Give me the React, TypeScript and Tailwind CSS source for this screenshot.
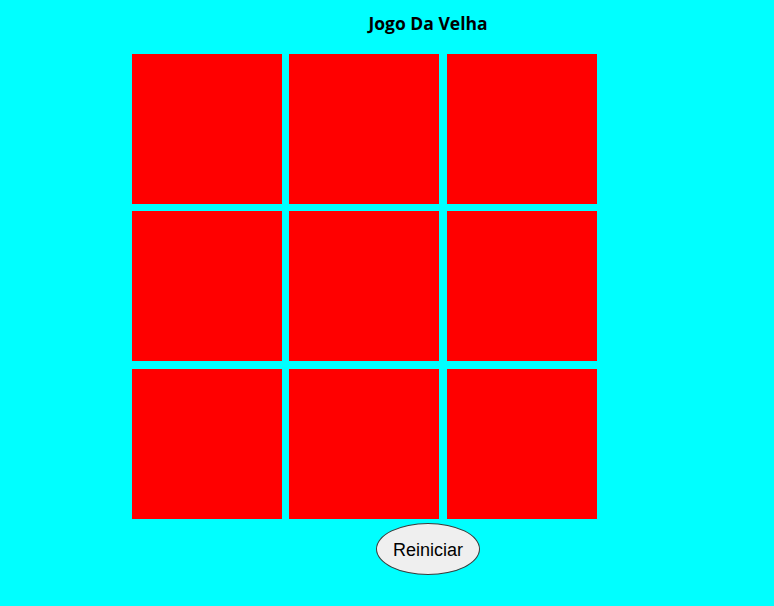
import { useState } from "react";

export default function App() {
  const [cells, setCells] = useState<string[]>(Array(9).fill(""));

  function handleClick(i: number) {
    const next = [...cells];
    if (next[i]) return;
    next[i] = next.filter(Boolean).length % 2 === 0 ? "X" : "O";
    setCells(next);
  }

  return (
    <div className="min-h-[606px] w-full bg-[#00ffff] overflow-hidden">
      <div className="w-[856px] pt-[10px]">
        <h3 className="h-[26px] text-center text-[17.5px] leading-[26px] font-bold text-black [font-family:'Open_Sans',sans-serif]">
          Jogo Da Velha
        </h3>
        <div className="ml-[132px] mt-[18px] grid w-[465px] grid-cols-[150px_151px_150px] grid-rows-[150px_151px_150px] items-start justify-items-start gap-[7px]">
          {cells.map((c, i) => (
            <div
              key={i}
              onClick={() => handleClick(i)}
              className="flex h-[150px] w-[150px] items-center justify-center bg-[#ff0000] text-6xl font-bold text-white [font-family:'Liberation_Sans',sans-serif]"
            >
              {c}
            </div>
          ))}
        </div>
        <div className="mt-[4px] flex justify-center">
          <button
            onClick={() => setCells(Array(9).fill(""))}
            className="h-[52px] w-[104px] rounded-[50%] border border-[#3b3b3b] bg-[#efefef] pt-[2px] text-[18px] text-black [font-family:'Liberation_Sans',sans-serif]"
          >
            Reiniciar
          </button>
        </div>
      </div>
    </div>
  );
}
